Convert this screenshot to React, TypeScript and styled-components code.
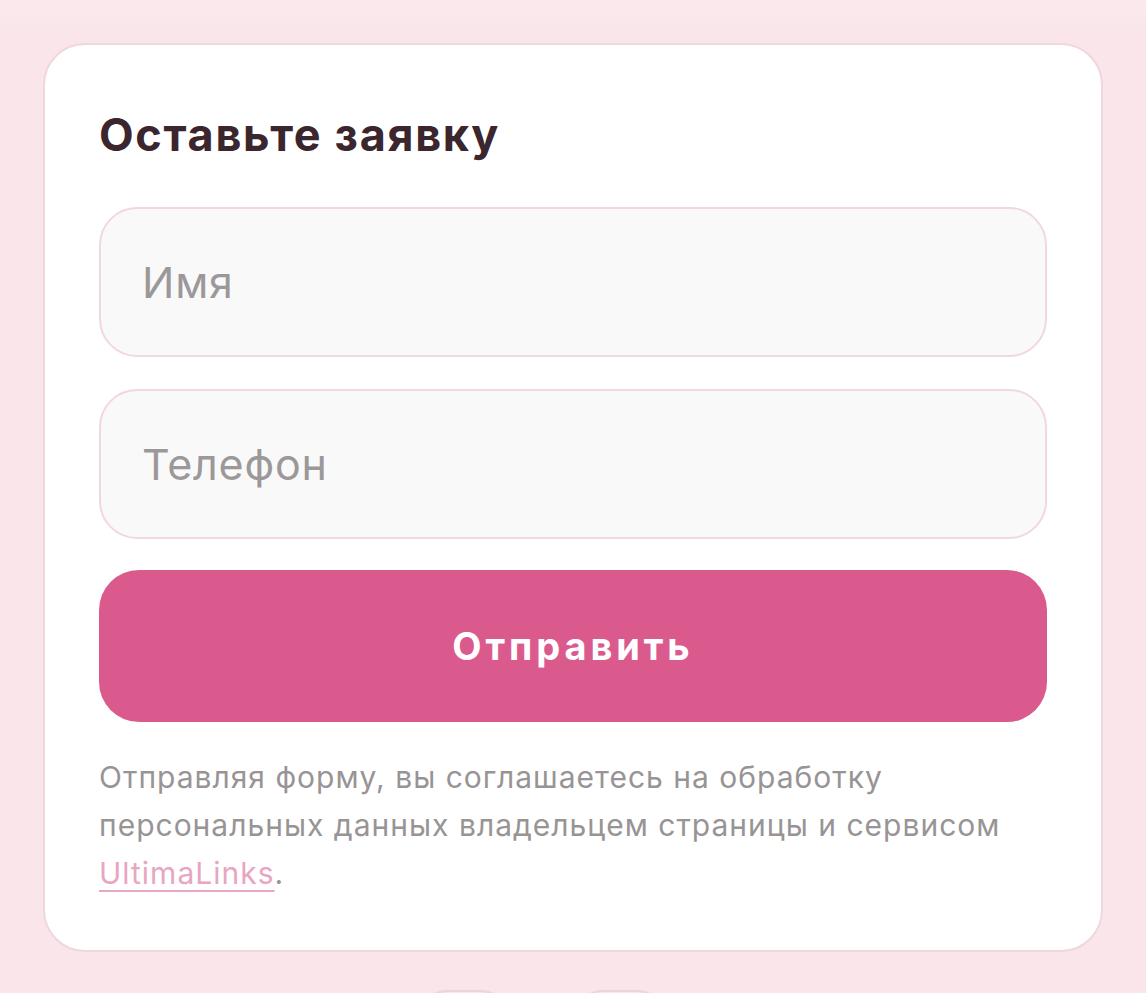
import React from "react";
import styled, { createGlobalStyle } from "styled-components";

const Global = createGlobalStyle`
  html, body { margin: 0; padding: 0; }
  body {
    background: #f9e5ea;
    font-family: Inter, "Noto Sans", "Liberation Sans", sans-serif;
    overflow: hidden;
  }
`;

const Page = styled.div`
  min-height: 1100px;
  padding: 43px 43px 0 43px;
  background: linear-gradient(180deg, #fae9ec 0px, #f9e5ea 40px);
  box-sizing: border-box;
`;

const Card = styled.section`
  width: 1060px;
  box-sizing: border-box;
  background: #ffffff;
  border: 2px solid #f0d6dd;
  border-radius: 42px;
  padding: 62px 54px 53px 54px;
  display: flex;
  flex-direction: column;
`;

const Title = styled.h2`
  margin: 0 0 44px 0;
  font-size: 45px;
  line-height: 56px;
  font-weight: 700;
  color: #3b262d;
  letter-spacing: 1.7px;
`;

const Form = styled.form`
  display: flex;
  flex-direction: column;
  gap: 32px;
`;

const Input = styled.input`
  height: 150px;
  box-sizing: border-box;
  width: 100%;
  border: 2px solid #f1d8de;
  border-radius: 38px;
  background: #f9f9f9;
  padding: 0 41px;
  font-family: inherit;
  font-size: 43px;
  letter-spacing: 0.8px;
  color: #3b262d;
  outline: none;
  &::placeholder { color: #9c9899; }
`;

const Submit = styled.button`
  height: 152px;
  border: none;
  border-radius: 40px;
  background: #db5a8d;
  color: #ffffff;
  font-family: inherit;
  font-size: 38px;
  letter-spacing: 3.9px;
  font-weight: 700;
  cursor: pointer;
  margin-top: -1px;
`;

const Note = styled.p`
  margin: 31px 0 0 0;
  font-size: 30px;
  line-height: 48px;
  letter-spacing: 1px;
  color: #989495;
`;

const Link = styled.a`
  color: #e7a6c1;
  text-decoration: underline;
  text-underline-offset: 6px;
  text-decoration-thickness: 2px;
`;

const Bottom = styled.div`
  display: flex;
  gap: 62px;
  margin-top: 38px;
  padding-left: 374px;
`;

const Round = styled.div`
  width: 90px;
  height: 90px;
  border-radius: 30px;
  border: 2px solid #ecd4da;
  background: #f9e5ea;
`;

export default function App() {
  return (
    <>
      <Global />
      <Page>
        <Card>
          <Title>Оставьте заявку</Title>
          <Form onSubmit={(e) => e.preventDefault()}>
            <Input placeholder="Имя" />
            <Input placeholder="Телефон" />
            <Submit type="submit">Отправить</Submit>
          </Form>
          <Note>
            Отправляя форму, вы соглашаетесь на обработку персональных данных
            владельцем страницы и сервисом <Link href="#">UltimaLinks</Link>.
          </Note>
        </Card>
        <Bottom>
          <Round />
          <Round />
        </Bottom>
      </Page>
    </>
  );
}
